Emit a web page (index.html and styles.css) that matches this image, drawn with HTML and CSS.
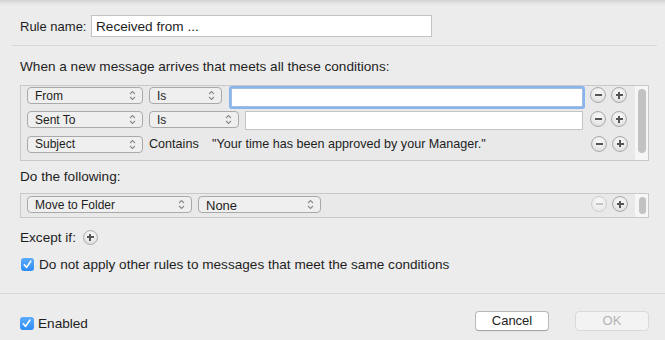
FILE: index.html
```html
<!DOCTYPE html>
<html>
<head>
<meta charset="utf-8">
<link rel="stylesheet" href="styles.css">
</head>
<body>
<div class="dialog">
  <div class="name-row">
    <span class="label">Rule name:</span>
    <div class="input name-input">Received from ...</div>
  </div>
  <div class="sep sep-top"></div>

  <div class="section-label first">When a new message arrives that meets all these conditions:</div>
  <div class="box cond-box">
    <div class="rows">
      <div class="row">
        <div class="popup w-from"><span>From</span><svg class="chev" viewBox="0 0 7 11"><path d="M1 4 L3.5 1.5 L6 4 M1 7 L3.5 9.5 L6 7"/></svg></div>
        <div class="popup w-is1"><span>Is</span><svg class="chev" viewBox="0 0 7 11"><path d="M1 4 L3.5 1.5 L6 4 M1 7 L3.5 9.5 L6 7"/></svg></div>
        <div class="field focus"></div>
        <div class="pm minus"></div>
        <div class="pm plus"></div>
      </div>
      <div class="row">
        <div class="popup w-from"><span>Sent To</span><svg class="chev" viewBox="0 0 7 11"><path d="M1 4 L3.5 1.5 L6 4 M1 7 L3.5 9.5 L6 7"/></svg></div>
        <div class="popup w-is2"><span>Is</span><svg class="chev" viewBox="0 0 7 11"><path d="M1 4 L3.5 1.5 L6 4 M1 7 L3.5 9.5 L6 7"/></svg></div>
        <div class="field plain"></div>
        <div class="pm minus"></div>
        <div class="pm plus"></div>
      </div>
      <div class="row">
        <div class="popup w-from"><span>Subject</span><svg class="chev" viewBox="0 0 7 11"><path d="M1 4 L3.5 1.5 L6 4 M1 7 L3.5 9.5 L6 7"/></svg></div>
        <span class="static contains">Contains</span>
        <span class="static quote">"Your time has been approved by your Manager."</span>
        <div class="pm minus push"></div>
        <div class="pm plus"></div>
      </div>
    </div>
    <div class="track"><div class="thumb thumb-tall"></div></div>
  </div>

  <div class="section-label second">Do the following:</div>
  <div class="box act-box">
    <div class="rows">
      <div class="row act-row">
        <div class="popup w-move"><span>Move to Folder</span><svg class="chev" viewBox="0 0 7 11"><path d="M1 4 L3.5 1.5 L6 4 M1 7 L3.5 9.5 L6 7"/></svg></div>
        <div class="popup w-none big"><span>None</span><svg class="chev" viewBox="0 0 7 11"><path d="M1 4 L3.5 1.5 L6 4 M1 7 L3.5 9.5 L6 7"/></svg></div>
        <div class="pm minus disabled push"></div>
        <div class="pm plus"></div>
      </div>
    </div>
    <div class="track"><div class="thumb thumb-short"></div></div>
  </div>

  <div class="except-row">
    <span class="label">Except if:</span>
    <div class="pm plus small"></div>
  </div>

  <label class="check-row">
    <span class="checkbox"><svg viewBox="0 0 13 13"><path d="M3.3 6.8 L5.6 9.4 L9.8 3.2"/></svg></span>
    <span class="label">Do not apply other rules to messages that meet the same conditions</span>
  </label>
</div>

<div class="sep sep-bottom"></div>

<div class="footer">
  <label class="check-row enabled">
    <span class="checkbox"><svg viewBox="0 0 13 13"><path d="M3.3 6.8 L5.6 9.4 L9.8 3.2"/></svg></span>
    <span class="label">Enabled</span>
  </label>
  <div class="buttons">
    <div class="btn">Cancel</div>
    <div class="btn disabled">OK</div>
  </div>
</div>
</body>
</html>
```

FILE: styles.css
```css
html, body {
  margin: 0;
  padding: 0;
}
body {
  width: 665px;
  height: 340px;
  overflow: hidden;
  background: linear-gradient(#d2d2d2 0px, #e4e4e4 3px, #ececec 6px, #ececec 100%);
  font-family: "Liberation Sans", Arial, sans-serif;
  font-size: 13.6px;
  color: #1e1e1e;
}
.dialog {
  padding-top: 15px;
}
.name-row {
  display: flex;
  align-items: center;
  padding-left: 20px;
  height: 22px;
}
.name-row .label {
  width: 71px;
  font-size: 13px;
}
.input {
  box-sizing: border-box;
  height: 22px;
  width: 341px;
  background: #fff;
  border: 1px solid #c3c3c3;
  padding: 3px 4px 0 4px;
  line-height: 16px;
}
.sep {
  height: 1px;
  background: #d6d6d6;
}
.sep-top {
  margin: 8px 8px 0 12px;
}
.section-label {
  line-height: 16px;
  padding-left: 20px;
}
.section-label.first {
  margin-top: 13px;
}
.section-label.second {
  margin-top: 8px;
}
.box {
  box-sizing: border-box;
  margin: 10px 16px 0 20px;
  border: 1px solid #c9c9c9;
  background: #e9e9e9;
  display: flex;
}
.cond-box {
  height: 76px;
}
.act-box {
  margin-top: 8px;
  height: 25px;
}
.rows {
  flex: 1;
  padding: 1px 7px 0 6px;
  display: flex;
  flex-direction: column;
}
.row {
  display: flex;
  align-items: flex-start;
  height: 25px;
}
.act-row {
  padding-top: 1px;
}
.popup {
  box-sizing: border-box;
  height: 17px;
  border: 1px solid #a9a9a9;
  border-radius: 4px;
  background: #efefef;
  display: flex;
  align-items: center;
  justify-content: space-between;
  padding: 0 6px 0 7px;
  font-size: 12px;
  margin-right: 6px;
  flex: none;
}
.popup span {
  line-height: 14px;
}
.popup.big span {
  font-size: 13px;
  padding-top: 2px;
}
.chev {
  width: 7px;
  height: 11px;
}
.chev path {
  fill: none;
  stroke: #8a8a8a;
  stroke-width: 1.1;
}
.w-from { width: 116px; }
.w-is1 { width: 73px; margin-right: 9px; }
.w-is2 { width: 90px; }
.w-move { width: 165px; }
.w-none { width: 123px; }
.field {
  box-sizing: border-box;
  background: #fff;
  border: 1px solid #c4c4c4;
  height: 19px;
  flex: none;
  margin-right: 7px;
}
.field.focus {
  width: 352px;
  margin-top: 1px;
  border-color: #a3bde0;
  box-shadow: 0 0 0 2px #89b4ee;
  border-radius: 1px;
}
.field.plain {
  width: 338px;
}
.static {
  font-size: 12.6px;
  line-height: 17px;
}
.contains {
  width: 63px;
}
.push {
  margin-left: auto;
}
.pm {
  box-sizing: border-box;
  position: relative;
  width: 16px;
  height: 16px;
  border-radius: 50%;
  border: 1px solid #ababab;
  background: radial-gradient(circle at 50% 35%, #fbfbfb 0%, #e9e9e9 55%, #d3d3d3 100%);
  flex: none;
}
.pm.plus {
  margin-left: 5px;
}
.pm::before, .pm.plus::after {
  content: "";
  position: absolute;
  background: #555;
  left: 3.5px;
  top: 6px;
  width: 7px;
  height: 2px;
}
.pm.plus::after {
  left: 6px;
  top: 3.5px;
  width: 2px;
  height: 7px;
}
.pm.disabled {
  border-color: #cfcfcf;
  background: radial-gradient(circle at 50% 35%, #f8f8f8 0%, #ececec 60%, #e2e2e2 100%);
}
.pm.disabled::before {
  background: #c4c4c4;
}
.pm.small {
  width: 15px;
  height: 15px;
  margin-left: 7px;
}
.pm.small::before {
  left: 3px;
  top: 5.5px;
}
.pm.small::after {
  left: 5.5px;
  top: 3px;
}
.track {
  width: 13px;
  background: #f6f6f6;
  display: flex;
  justify-content: center;
  padding-left: 1px;
  box-sizing: border-box;
}
.thumb {
  width: 8px;
  border-radius: 4px;
  background: #c2c2c2;
}
.thumb-tall {
  margin-top: 3px;
  height: 64px;
}
.thumb-short {
  margin-top: 3px;
  height: 17px;
  width: 7px;
}
.except-row {
  display: flex;
  align-items: center;
  padding-left: 20px;
  margin-top: 11px;
  height: 16px;
}
.check-row {
  display: flex;
  align-items: center;
  padding-left: 21px;
  margin-top: 11px;
  height: 16px;
}
.checkbox {
  box-sizing: border-box;
  width: 13px;
  height: 13px;
  border-radius: 3px;
  background: linear-gradient(#5dacfc, #2c8cf4);
  margin-right: 5px;
  flex: none;
  display: flex;
}
.checkbox svg {
  width: 13px;
  height: 13px;
}
.checkbox path {
  fill: none;
  stroke: #fff;
  stroke-width: 1.6;
  stroke-linecap: round;
  stroke-linejoin: round;
}
.sep-bottom {
  margin-top: 21px;
}
.footer {
  display: flex;
  justify-content: space-between;
  align-items: flex-start;
  padding: 17px 16px 0 0;
}
.check-row.enabled {
  margin-top: 4px;
  padding-left: 20px;
}
.check-row.enabled .checkbox {
  width: 14px;
  margin-right: 4px;
}
.buttons {
  display: flex;
  gap: 26px;
}
.btn {
  box-sizing: border-box;
  width: 74px;
  height: 20px;
  border: 1px solid #b8b8b8;
  border-bottom-color: #a5a5a5;
  border-radius: 4px;
  background: #fff;
  text-align: center;
  line-height: 18px;
  font-size: 13px;
  box-shadow: 0 0.5px 0.5px rgba(0,0,0,0.08);
}
.btn.disabled {
  background: #f3f3f3;
  border-color: #d9d9d9;
  color: #b4b4b4;
  box-shadow: none;
}
```
